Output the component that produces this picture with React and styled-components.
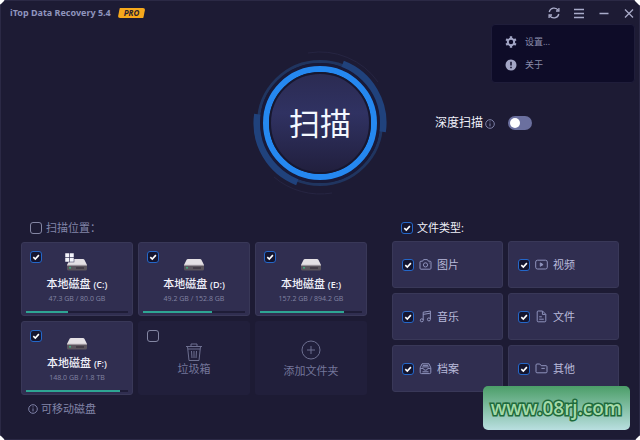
import React, { useState } from "react";
import styled, { createGlobalStyle } from "styled-components";

const DISKS = [
    { letter: "C", size: "47.3 GB / 80.0 GB", used: 41, system: true },
    { letter: "D", size: "49.2 GB / 152.8 GB", used: 68 },
    { letter: "E", size: "157.2 GB / 894.2 GB", used: 82 },
    { letter: "F", size: "148.0 GB / 1.8 TB", used: 92 },
];

const TYPES = [
    { name: "图片", Icon: CameraIcon },
    { name: "视频", Icon: VideoIcon },
    { name: "音乐", Icon: MusicIcon },
    { name: "文件", Icon: FileIcon },
    { name: "档案", Icon: ArchiveIcon },
    { name: "其他", Icon: FolderIcon },
];

function CameraIcon() {
    return (
        <LineIcon viewBox="0 0 13 13">
            <path d="M1 4.2q0-1 1-1h1.6l1-1.6h3.8l1 1.6H11q1 0 1 1v6q0 1-1 1H2q-1 0-1-1z" />
            <circle cx="6.5" cy="6.9" r="2.1" />
            <path d="M10 5h.6" />
        </LineIcon>
    );
}

function VideoIcon() {
    return (
        <LineIcon viewBox="0 0 13 13">
            <rect x="0.7" y="2.2" width="11.6" height="8.8" rx="1.8" />
            <path d="M5.3 4.9v3.4l2.8-1.7z" fill="#8f93bd" />
        </LineIcon>
    );
}

function MusicIcon() {
    return (
        <LineIcon viewBox="0 0 13 13">
            <path d="M4.2 10V2.2L11.4 1v8" />
            <path d="M4.2 4.4l7.2-1.2" />
            <circle cx="2.8" cy="10.3" r="1.5" />
            <circle cx="9.9" cy="9.4" r="1.5" />
        </LineIcon>
    );
}

function FileIcon() {
    return (
        <LineIcon viewBox="0 0 13 13">
            <path d="M2.2 2q0-1 1-1h4.3l3.3 3.3v6.5q0 1-1 1H3.2q-1 0-1-1z" />
            <path d="M7.4 1.2v3.2h3.2M4.2 6.8h2.6M4.2 9.2h4.6" />
        </LineIcon>
    );
}

function ArchiveIcon() {
    return (
        <LineIcon viewBox="0 0 13 13">
            <path d="M1.2 5.8L3 1.8h7l1.8 4v4.6q0 1.2-1.2 1.2H2.4q-1.2 0-1.2-1.2z" />
            <path d="M1.4 6.4h2.8q.3 1.8 2.3 1.8t2.3-1.8h2.8M3.8 3.4h5.4M3.2 4.9h6.6M3.5 9.8h6" />
        </LineIcon>
    );
}

function FolderIcon() {
    return (
        <LineIcon viewBox="0 0 13 13">
            <path d="M1 3q0-1 1-1h2.8l1.4 1.7H11q1 0 1 1v5.1q0 1-1 1H2q-1 0-1-1z" />
            <path d="M6.4 6.4h3.4" />
        </LineIcon>
    );
}

function InfoIcon() {
    return (
        <SmallIcon viewBox="0 0 10 10">
            <circle cx="5" cy="5" r="4.3" />
            <path d="M5 4.4v3M5 2.4v1" />
        </SmallIcon>
    );
}

function DriveIcon({ system }) {
    return (
        <DriveSvg viewBox="0 0 24 20">
            <path d="M6 8h12q1 0 1.4.8L22 14H2l2.6-5.2Q5 8 6 8z" fill="#e4e0e4" />
            <path d="M2 14h20v4q0 1.5-1.5 1.5h-17Q2 19.5 2 18z" fill="#5b555d" />
            <path d="M2 14.3h20" stroke="#a9a2aa" />
            <circle cx="5" cy="16.8" r="1" fill="#3fae7e" />
            <path d="M11 17h8" stroke="#3b3540" strokeWidth="1.5" />
            {system && (
                <g fill="#f4f5fb" stroke="#302e50" strokeWidth="0.5">
                    <rect x="0" y="2" width="4.5" height="4.5" />
                    <rect x="4.5" y="2" width="4.5" height="4.5" />
                    <rect x="0" y="6.5" width="4.5" height="4.5" />
                    <rect x="4.5" y="6.5" width="4.5" height="4.5" />
                </g>
            )}
        </DriveSvg>
    );
}

function Tick(props) {
    return (
        <TickBox>
            <input type="checkbox" {...props} />
            <svg viewBox="0 0 12 12">
                <path d="M3.3 6.1l2 1.9 3.6-3.9" />
            </svg>
        </TickBox>
    );
}

function Dial() {
    return (
        <DialSvg viewBox="-72 -72 144 144" aria-hidden="true">
            <defs>
                <linearGradient id="face" x1="0" y1="0" x2="0" y2="1">
                    <stop offset="0" stopColor="#2b2b52" />
                    <stop offset="0.4" stopColor="#303262" />
                    <stop offset="1" stopColor="#211f3d" />
                </linearGradient>
            </defs>
            <g fill="none">
                <path d="M-12-70A71 71 0 0 1 58-41M12 70A71 71 0 0 1-46 54" stroke="#262542" />
                <circle r="61.5" stroke="#203560" strokeWidth="3" />
                <path
                    d="M22.6-58.9A63 63 0 0 1 62.4 8.8M-22.6 58.9A63 63 0 0 1-62.4-8.8"
                    stroke="#20427c"
                    strokeWidth="7"
                />
                <circle r="58.5" stroke="#191a38" strokeWidth="3" />
                <circle r="54" stroke="#2588f0" strokeWidth="6" />
            </g>
            <circle r="50" fill="url(#face)" stroke="#17172f" strokeWidth="2" />
        </DialSvg>
    );
}

function TitleBar() {
    return (
        <Bar>
            <Title>iTop Data Recovery 5.4</Title>
            <ProBadge>PRO</ProBadge>
            <WindowButtons>
                <WindowButton aria-label="Refresh">
                    <svg viewBox="0 0 12 12">
                        <path d="M1.2 5A5 5 0 0 1 10.3 3.4M10.8 7A5 5 0 0 1 1.7 8.6" />
                        <path d="M10.9 1v3H8M1.1 11V8H4" />
                    </svg>
                </WindowButton>
                <WindowButton aria-label="Menu">
                    <svg viewBox="0 0 12 12">
                        <path d="M1 2.5h10M1 6.5h10M1 10.5h10" />
                    </svg>
                </WindowButton>
                <WindowButton aria-label="Minimize">
                    <svg viewBox="0 0 12 12">
                        <path d="M1.5 6.5h9" />
                    </svg>
                </WindowButton>
                <WindowButton aria-label="Close">
                    <svg viewBox="0 0 12 12">
                        <path d="M2 2.5l8 8M10 2.5l-8 8" />
                    </svg>
                </WindowButton>
            </WindowButtons>
        </Bar>
    );
}

function Menu() {
    return (
        <MenuPanel>
            <MenuItem>
                <svg viewBox="0 0 12 12">
                    <circle cx="6" cy="6" r="3.2" fill="none" stroke="#a3a6c6" strokeWidth="2" />
                    <path
                        d="M6 .3v2M6 9.7v2M1.1 3.2l1.7 1M9.2 7.8l1.7 1M1.1 8.8l1.7-1M9.2 4.2l1.7-1"
                        stroke="#a3a6c6"
                        strokeWidth="2.4"
                    />
                </svg>
                设置...
            </MenuItem>
            <MenuItem>
                <svg viewBox="0 0 12 12">
                    <circle cx="6" cy="6" r="5.5" fill="#a3a6c6" />
                    <path d="M6 2.8v3.8M6 7.8v1.5" stroke="#0e0c28" strokeWidth="1.5" />
                </svg>
                关于
            </MenuItem>
        </MenuPanel>
    );
}

function App() {
    const [deep, setDeep] = useState(false);

    return (
        <Window>
            <GlobalStyle />
            <TitleBar />
            <Menu />
            <Hero>
                <ScanButton>
                    <Dial />
                    <span>扫描</span>
                </ScanButton>
                <DeepScan>
                    深度扫描
                    <InfoIcon />
                    <Switch
                        type="checkbox"
                        role="switch"
                        checked={deep}
                        onChange={() => setDeep(!deep)}
                    />
                </DeepScan>
            </Hero>
            <Panels>
                <section>
                    <PanelHead>
                        <Tick />
                        扫描位置：
                    </PanelHead>
                    <DiskGrid>
                        {DISKS.map((disk) => (
                            <DiskCard key={disk.letter}>
                                <Tick defaultChecked />
                                <DiskBody>
                                    <DriveIcon system={disk.system} />
                                    <DiskName>
                                        本地磁盘 <small>({disk.letter}:)</small>
                                    </DiskName>
                                    <DiskSize>{disk.size}</DiskSize>
                                </DiskBody>
                                <Track>
                                    <Used style={{ width: `${disk.used}%` }} />
                                </Track>
                            </DiskCard>
                        ))}
                        <DiskCard $dim>
                            <Tick />
                            <Place>
                                <svg viewBox="0 0 20 20">
                                    <path d="M2 4.5h16M7 4.5V2h6v2.5M3.5 4.5L5 18.5h10l1.5-14M4 7h12" />
                                    <path d="M7.5 9l.5 7M10 9v7M12.5 9l-.5 7" />
                                </svg>
                                垃圾箱
                            </Place>
                        </DiskCard>
                        <AddButton>
                            <svg viewBox="0 0 20 20">
                                <circle cx="10" cy="10" r="9" />
                                <path d="M10 6v8M6 10h8" />
                            </svg>
                            添加文件夹
                        </AddButton>
                    </DiskGrid>
                    <Removable>
                        <InfoIcon />
                        可移动磁盘
                    </Removable>
                </section>
                <section>
                    <PanelHead $bright>
                        <Tick defaultChecked />
                        文件类型:
                    </PanelHead>
                    <TypeGrid>
                        {TYPES.map(({ name, Icon }) => (
                            <TypeCard key={name}>
                                <Tick defaultChecked />
                                <Icon />
                                {name}
                            </TypeCard>
                        ))}
                    </TypeGrid>
                </section>
            </Panels>
            <SiteMark href="#">www.08rj.com</SiteMark>
        </Window>
    );
}

const GlobalStyle = createGlobalStyle`
    * {
        box-sizing: border-box;
    }

    body {
        margin: 0;
        background: #ffffff;
        font-family: "Open Sans", "Noto Sans CJK SC", sans-serif;
        font-size: 11px;
        line-height: 14px;
    }

    button {
        padding: 0;
        border: 0;
        background: none;
        color: inherit;
        font: inherit;
    }
`;

const Window = styled.main`
    position: relative;
    min-height: 100vh;
    background: #1d1b34;
    border: 1px solid #2b2945;
    color: #8285a8;
    clip-path: polygon(
        5px 0, calc(100% - 6px) 0, 100% 6px, 100% calc(100% - 5px),
        calc(100% - 5px) 100%, 5px 100%, 0 calc(100% - 5px), 0 5px
    );
`;

const Bar = styled.header`
    display: flex;
    align-items: center;
    height: 24px;
    padding: 0 4px 0 9px;
`;

const Title = styled.h1`
    margin: 0;
    color: #8f94bd;
    font-family: "Noto Sans", sans-serif;
    font-size: 9px;
    font-weight: 700;
`;

const ProBadge = styled.span`
    margin-left: 7px;
    padding: 0 6px;
    border-radius: 2px;
    background: #f6a81c;
    clip-path: polygon(2px 0, 100% 0, calc(100% - 2px) 100%, 0 100%);
    color: #2a2130;
    font-size: 8px;
    font-style: italic;
    font-weight: 700;
    line-height: 10px;
`;

const WindowButtons = styled.div`
    display: flex;
    gap: 13px;
    margin-left: auto;
`;

const WindowButton = styled.button`
    display: block;
    width: 12px;
    height: 12px;

    svg {
        display: block;
        fill: none;
        stroke: #a9abc9;
        stroke-width: 1.3;
    }
`;

const MenuPanel = styled.div`
    position: absolute;
    top: 23px;
    right: 4px;
    display: flex;
    flex-direction: column;
    gap: 9px;
    width: 144px;
    padding: 10px 13px;
    border: 1px solid #1f1d3a;
    border-radius: 4px;
    background: #0e0c28;
`;

const MenuItem = styled.button`
    display: flex;
    align-items: center;
    gap: 8px;
    color: #8a8cab;
    font-size: 9px;
    line-height: 14px;

    svg {
        width: 12px;
        height: 12px;
    }
`;

const Hero = styled.div`
    display: grid;
    grid-template-columns: 1fr 144px 1fr;
    align-items: center;
    padding-top: 26px;
`;

const ScanButton = styled.button`
    display: grid;
    grid-column: 2;
    place-items: center;
    color: #f3f8ff;
    font-size: 31px;
    line-height: 40px;

    & > * {
        grid-area: 1 / 1;
    }
`;

const DialSvg = styled.svg`
    display: block;
    width: 144px;
    height: 144px;
`;

const DeepScan = styled.label`
    display: flex;
    align-items: center;
    padding-left: 43px;
    color: #f0f1fa;
    font-size: 12px;

    svg {
        margin: 2px 13px 0 2px;
    }
`;

const Switch = styled.input`
    appearance: none;
    display: flex;
    align-items: center;
    width: 24px;
    height: 14px;
    margin: 0;
    padding: 2px;
    border-radius: 7px;
    background: #6b709f;

    &::before {
        content: "";
        width: 10px;
        height: 10px;
        border-radius: 50%;
        background: #ffffff;
    }

    &:checked {
        justify-content: flex-end;
        background: #2588f0;
    }
`;

const SmallIcon = styled.svg`
    width: 10px;
    height: 10px;
    fill: none;
    stroke: #7f82a8;
`;

const LineIcon = styled.svg`
    width: 13px;
    height: 13px;
    fill: none;
    stroke: #8f93bd;
    stroke-linejoin: round;
`;

const TickBox = styled.span`
    display: grid;
    flex: none;
    width: 12px;
    height: 12px;

    input,
    svg {
        grid-area: 1 / 1;
        width: 12px;
        height: 12px;
        margin: 0;
    }

    input {
        appearance: none;
        border: 1px solid #8486a3;
        border-radius: 3px;
    }

    input:checked {
        border-color: #2467c9;
        background: #14152f;
    }

    svg {
        visibility: hidden;
        pointer-events: none;
        fill: none;
        stroke: #ffffff;
        stroke-width: 1.6;
    }

    input:checked + svg {
        visibility: visible;
    }
`;

const Panels = styled.div`
    display: grid;
    grid-template-columns: 346fr 227fr;
    gap: 25px;
    padding: 26px 20px 0;
`;

const PanelHead = styled.label`
    display: flex;
    align-items: center;
    gap: 4px;
    margin: 0 0 ${(props) => (props.$bright ? "6px" : "7px")} 9px;
    color: ${(props) => (props.$bright ? "#f0f1fa" : "#8285a8")};
`;

const DiskGrid = styled.div`
    display: grid;
    grid-template-columns: repeat(3, 1fr);
    gap: 5px;
`;

const DiskCard = styled.label`
    display: grid;
    grid-template-rows: 1fr 2px;
    height: 74px;
    padding: 8px 4px 2px;
    border: 1px solid ${(props) => (props.$dim ? "#211f3b" : "#393858")};
    border-radius: 3px;
    background: ${(props) => (props.$dim ? "#211f3b" : "#302e50")};

    & > ${TickBox} {
        grid-area: 1 / 1;
        margin-left: 4px;
    }
`;

const DiskBody = styled.div`
    display: flex;
    grid-area: 1 / 1;
    flex-direction: column;
    align-items: center;
`;

const DriveSvg = styled.svg`
    width: 24px;
    height: 20px;
`;

const DiskName = styled.span`
    margin-top: 6px;
    color: #f0f1fa;
    font-weight: 500;

    small {
        font-size: 9px;
        font-weight: 600;
    }
`;

const DiskSize = styled.span`
    color: #8284a3;
    font-size: 7px;
`;

const Track = styled.div`
    grid-row: 2;
    background: #1f1d38;
`;

const Used = styled.div`
    height: 2px;
    background: #2ea593;
`;

const Place = styled.span`
    display: flex;
    grid-area: 1 / 1;
    flex-direction: column;
    align-items: center;
    padding-top: 12px;
    color: #74769a;

    svg {
        width: 20px;
        height: 20px;
        fill: none;
        stroke: #6d6f90;
    }
`;

const AddButton = styled.button`
    display: flex;
    flex-direction: column;
    gap: 4px;
    align-items: center;
    justify-content: center;
    padding-top: 2px;
    border-radius: 3px;
    background: #211f3b;
    color: #74769a;

    svg {
        width: 20px;
        height: 20px;
        fill: none;
        stroke: #6d6f90;
    }
`;

const Removable = styled.div`
    display: flex;
    align-items: center;
    gap: 3px;
    margin: 7px 0 0 7px;
`;

const TypeGrid = styled.div`
    display: grid;
    grid-template-columns: repeat(2, 1fr);
    gap: 5px;
`;

const TypeCard = styled.label`
    display: flex;
    align-items: center;
    gap: 5px;
    height: 47px;
    padding-left: 9px;
    border: 1px solid #393858;
    border-radius: 3px;
    background: #302e50;
    color: #b9bbdb;
`;

const SiteMark = styled.a`
    position: absolute;
    right: 9px;
    bottom: 9px;
    padding: 0 8px;
    border-radius: 5px;
    background: linear-gradient(#4b9e68, #b9dfe0);
    color: #a5dba9;
    font-size: 19px;
    font-weight: 600;
    line-height: 44px;
    text-decoration: none;
    paint-order: stroke fill;
    -webkit-text-stroke: 3px #1f6b3c;
`;

export default App;
